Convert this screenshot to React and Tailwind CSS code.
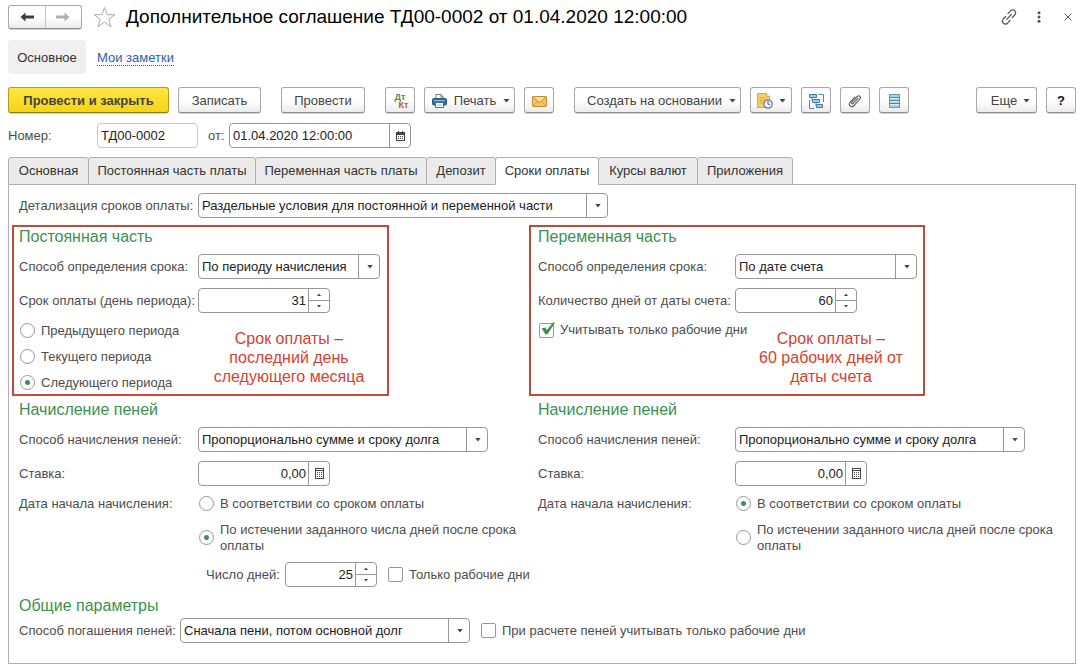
import { useState } from 'react';
import { clsx } from 'clsx';

const tabs = [
  { id: 'main', label: 'Основная', width: 'w-[81px]' },
  { id: 'fixed', label: 'Постоянная часть платы', width: 'w-[168px]' },
  { id: 'variable', label: 'Переменная часть платы', width: 'w-[172px]' },
  { id: 'deposit', label: 'Депозит', width: 'w-[70px]' },
  { id: 'terms', label: 'Сроки оплаты', width: 'w-[104px]' },
  { id: 'rates', label: 'Курсы валют', width: 'w-[100px]' },
  { id: 'files', label: 'Приложения', width: 'w-[96px]' },
];

const Caret = () => (
  <svg width="7" height="4" viewBox="0 0 7 4" className="shrink-0" aria-hidden="true">
    <path d="M0.5 0h6L3.5 3.6z" fill="#444" />
  </svg>
);

const ToolButton = ({ className, primary, children, ...rest }) => (
  <button
    type="button"
    className={clsx(
      'flex h-[26px] shrink-0 items-center justify-center whitespace-nowrap rounded-[3px] border pt-[2px] shadow-[0_1px_0_#d4d4d4]',
      primary
        ? 'border-[#b39b1c] border-b-[#8f7b10] bg-linear-to-b from-[#ffe640] to-[#f8d313] font-bold'
        : 'border-[#a9a9a9] border-b-[#8c8c8c] bg-linear-to-b from-white from-50% to-[#ececec]',
      className
    )}
    {...rest}
  >
    {children}
  </button>
);

const SelectBox = ({ id, className, options, ...rest }) => (
  <span className={clsx('relative inline-block shrink-0', className)}>
    <select
      id={id}
      className="h-[25px] w-full appearance-none rounded-[4px] border border-[#979797] bg-white pl-[3px] pr-6 text-[#222]"
      {...rest}
    >
      {options.map((o) => (
        <option key={o}>{o}</option>
      ))}
    </select>
    <span className="pointer-events-none absolute inset-y-0 right-0 flex w-[22px] items-center justify-center border-l border-[#979797]">
      <svg width="6" height="4" viewBox="0 0 6 4" aria-hidden="true">
        <path d="M0.3 0h5.4L3 3.4z" fill="#444" />
      </svg>
    </span>
  </span>
);

const fieldBox = 'flex h-[25px] shrink-0 overflow-hidden rounded-[4px] border border-[#979797] bg-white';

const Spinner = ({ id, value, className }) => {
  const [n, setN] = useState(value);
  return (
    <span className={clsx(fieldBox, className)}>
      <input
        id={id}
        value={n}
        onChange={(e) => setN(Number(e.target.value) || 0)}
        className="min-w-0 flex-1 pr-[2px] text-right text-[#222] outline-none"
      />
      <span className="flex w-[21px] flex-col border-l border-[#979797]">
        <button type="button" aria-label="Больше" onClick={() => setN(n + 1)} className="flex flex-1 items-center justify-center border-b border-[#979797]">
          <svg width="4" height="3" viewBox="0 0 4 3"><path d="M0 3h4L2 0.4z" fill="#444" /></svg>
        </button>
        <button type="button" aria-label="Меньше" onClick={() => setN(n - 1)} className="flex flex-1 items-center justify-center">
          <svg width="4" height="3" viewBox="0 0 4 3"><path d="M0 0h4L2 2.6z" fill="#444" /></svg>
        </button>
      </span>
    </span>
  );
};

const RateInput = ({ id }) => (
  <span className={clsx(fieldBox, 'w-[132px]')}>
    <input id={id} defaultValue="0,00" className="min-w-0 flex-1 pr-[2px] text-right text-[#222] outline-none" />
    <button type="button" aria-label="Калькулятор" className="flex w-[21px] items-center justify-center border-l border-[#979797]">
      <svg width="9" height="11" viewBox="0 0 9 11" shapeRendering="crispEdges">
        <path d="M0.5 0.5h8v10h-8zM0 2.5h9" fill="none" stroke="#444" />
        <path d="M2 4h1v1H2zM4 4h1v1H4zM6 4h1v1H6zM2 6h1v1H2zM4 6h1v1H4zM6 6h1v1H6zM2 8h1v1H2zM4 8h1v1H4zM6 8h1v1H6z" fill="#444" />
      </svg>
    </button>
  </span>
);

const Radio = ({ name, defaultChecked, children }) => (
  <label className="flex items-center gap-[6px]">
    <input
      type="radio"
      name={name}
      defaultChecked={defaultChecked}
      className="size-[15px] shrink-0 appearance-none rounded-full border border-[#979797] bg-white checked:bg-[radial-gradient(circle,#3f8f55_2px,white_3px)]"
    />
    <span className="pt-[2px] leading-4">{children}</span>
  </label>
);

const Checkbox = ({ defaultChecked, children }) => (
  <label className="flex items-center gap-[6px]">
    <span className="relative flex shrink-0">
      <input
        type="checkbox"
        defaultChecked={defaultChecked}
        className="peer size-[15px] appearance-none rounded-[2px] border border-[#979797] bg-white"
      />
      <svg className="pointer-events-none absolute -top-[1px] left-[2px] hidden peer-checked:block" width="15" height="14" viewBox="0 0 15 14">
        <path d="M0.6 6.2l3.8-0.8 1.4 2.6L12 0.5l2 0.2L6.6 12.2H4.4z" fill="#3f9154" />
      </svg>
    </span>
    <span className="leading-4">{children}</span>
  </label>
);

const Field = ({ id, label, labelWidth, children }) => (
  <div className="flex h-[25px] items-center">
    <label htmlFor={id} className={clsx('shrink-0 whitespace-nowrap', labelWidth)}>
      {label}
    </label>
    {children}
  </div>
);

const Heading = ({ children }) => <h2 className="text-[16px] leading-5 text-[#3c9150]">{children}</h2>;

const Penalty = ({ prefix, labelWidth, afterDays, children }) => (
  <section>
    <Heading>Начисление пеней</Heading>
    <div className="mt-[7px] flex flex-col gap-[9px]">
      <Field id={`${prefix}-method`} label="Способ начисления пеней:" labelWidth={labelWidth}>
        <SelectBox id={`${prefix}-method`} className="w-[290px]" options={['Пропорционально сумме и сроку долга']} />
      </Field>
      <Field id={`${prefix}-rate`} label="Ставка:" labelWidth={labelWidth}>
        <RateInput id={`${prefix}-rate`} />
      </Field>
    </div>
    <div role="radiogroup" aria-label="Дата начала начисления" className="mt-2 flex">
      <span className={clsx('shrink-0 pt-[2px] leading-4', labelWidth)}>Дата начала начисления:</span>
      <div className="flex flex-col gap-2 pl-px">
        <Radio name={`${prefix}-start`} defaultChecked={!afterDays}>В соответствии со сроком оплаты</Radio>
        <Radio name={`${prefix}-start`} defaultChecked={afterDays}>
          По истечении заданного числа дней после срока
          <br />
          оплаты
        </Radio>
      </div>
    </div>
    {children}
  </section>
);

const Toolbar = () => (
  <div className="mt-[13px] flex gap-5 text-[#444]">
    <div className="flex gap-[9px]">
      <ToolButton primary className="w-[161px]">Провести и закрыть</ToolButton>
      <ToolButton className="w-[83px]">Записать</ToolButton>
    </div>
    <ToolButton className="w-[84px]">Провести</ToolButton>
    <div className="flex gap-[9px]">
      <ToolButton className="w-[30px]" aria-label="Дт Кт">
        <span className="flex w-[17px] flex-col text-[9px] font-bold leading-2">
          <span className="text-[#3f9154]">Дт</span>
          <span className="self-end text-[#c8504f]">Кт</span>
        </span>
      </ToolButton>
      <ToolButton className="w-[91px] gap-[7px] pl-[3px]">
        <svg width="15" height="14" viewBox="0 0 15 14" className="shrink-0">
          <path d="M4 5V0.5h5L11 2.5V5" fill="#fff" stroke="#5d7f99" />
          <path d="M9 0.5V3h2" fill="none" stroke="#5d7f99" />
          <rect x="0.5" y="4.5" width="14" height="6.5" rx="1.2" fill="#336e97" stroke="#285b80" />
          <rect x="2" y="6" width="11" height="1.2" fill="#8cb6d2" />
          <path d="M3.5 8.5h8v5h-8z" fill="#fff" stroke="#42718f" />
          <path d="M5 11h5" stroke="#9db8ca" />
        </svg>
        Печать
        <Caret />
      </ToolButton>
      <ToolButton className="w-[30px]" aria-label="Отправить">
        <svg width="15" height="11" viewBox="0 0 15 11">
          <rect x="0.5" y="0.5" width="14" height="10" rx="0.8" fill="#f6c65c" stroke="#c58a2c" />
          <path d="M1 10l4.8-4.4M14 10L9.2 5.6" stroke="#d19a3c" />
          <path d="M1 1l6.5 5.8L14 1" fill="#fbe0a0" stroke="#c58a2c" />
        </svg>
      </ToolButton>
    </div>
    <div className="flex gap-[9px]">
      <ToolButton className="w-[167px] gap-[7px] pl-2">
        Создать на основании
        <Caret />
      </ToolButton>
      <ToolButton className="w-[42px] gap-[6px]" aria-label="Напоминания">
        <svg width="16" height="16" viewBox="0 0 16 16" className="shrink-0">
          <path d="M0.5 0.5h9l3 3v11h-12z" fill="#f7cf68" stroke="#d9ab42" />
          <path d="M9.5 0.5v3h3" fill="#fdebb8" stroke="#d9ab42" />
          <path d="M2.5 5h6M2.5 7.5h4M2.5 10h3" stroke="#d9a940" />
          <circle cx="11" cy="11" r="4.2" fill="#f4f6fb" stroke="#66779c" strokeWidth="1.2" />
          <path d="M11 8v3l2 1" fill="none" stroke="#4e6085" />
        </svg>
        <Caret />
      </ToolButton>
      <ToolButton className="w-[30px]" aria-label="Структура подчиненности">
        <svg width="15" height="15" viewBox="0 0 15 15">
          <path d="M9.5 0.5h5V8M5 14.5H0.5V6M3 4v2.5h2M7 9v3h2" fill="none" stroke="#5587a9" />
          <path d="M0.5 0.5h7v3h-7zM3.5 5.5h7v3h-7zM7.5 10.5h6v3h-6z" fill="#a6cce3" stroke="#447ba2" />
        </svg>
      </ToolButton>
      <ToolButton className="w-[30px]" aria-label="Файлы">
        <svg width="14" height="15" viewBox="0 0 14 15">
          <path
            d="M10 4.2L5.3 9.4c-.9 1-2.2-.1-1.3-1.2L9.2 2.5c1.8-1.8 4.3.3 2.7 2.3L6 11.5c-2.7 2.7-6.2-.4-3.9-3.2L6.8 3"
            fill="none"
            stroke="#5c5c5c"
            strokeWidth="1.1"
            strokeLinecap="round"
          />
        </svg>
      </ToolButton>
      <ToolButton className="w-[30px]" aria-label="Список">
        <svg width="11" height="14" viewBox="0 0 11 14" shapeRendering="crispEdges">
          <path d="M0.5 0.5h10v13h-10z" fill="#a9d3e6" stroke="#5d9abb" />
          <path d="M0 3.5h11M0 6.5h11M0 9.5h11" stroke="#4b86a8" />
          <path d="M1 4.5h9M1 7.5h9M1 10.5h9" stroke="#d8edf6" />
        </svg>
      </ToolButton>
    </div>
    <div className="ml-auto flex gap-[9px]">
      <ToolButton className="w-[61px] gap-[6px] pl-2">
        Еще
        <Caret />
      </ToolButton>
      <ToolButton className="w-[30px] font-bold text-[#111]">?</ToolButton>
    </div>
  </div>
);

const App = () => {
  const [tab, setTab] = useState('terms');

  return (
    <div className="min-h-screen bg-white pb-[6px] pl-2 pr-[6px] font-['Liberation_Sans',Arial,sans-serif] text-[13px] leading-4 text-[#4d4d4d]">
      {/* Title bar */}
      <header className="flex items-center pt-[5px]">
        <div className="flex h-6 w-[74px] rounded-[3px] border border-[#a9a9a9] border-b-[#8c8c8c] bg-linear-to-b from-white from-50% to-[#ececec] shadow-[0_1px_0_#d4d4d4]">
          <button type="button" aria-label="Назад" className="flex flex-1 items-center justify-center border-r border-[#c4c4c4]">
            <svg width="14" height="10" viewBox="0 0 14 10"><path d="M0.5 5l5-4.5v3H14v3H5.5v3z" fill="#3c3c3c" /></svg>
          </button>
          <button type="button" aria-label="Вперед" className="flex flex-1 items-center justify-center">
            <svg width="14" height="10" viewBox="0 0 14 10"><path d="M13.5 5l-5-4.500v3H0v3h8.500v3z" fill="#b0b0b0" /></svg>
          </button>
        </div>
        <button type="button" aria-label="В избранное" className="ml-[10px]">
          <svg width="25" height="22" viewBox="0 0 25 22">
            <path d="M12.5 1.5l2.7 7.2h7.6l-6.1 4.6 2.3 7.3-6.5-4.5-6.5 4.5 2.3-7.3-6.1-4.6h7.6z" fill="#fff" stroke="#ababab" />
          </svg>
        </button>
        <h1 className="ml-[9px] text-[19px] leading-6 text-black">Дополнительное соглашение ТД00-0002 от 01.04.2020 12:00:00</h1>
        <div className="ml-auto flex items-center gap-5 pr-1 text-[#555]">
          <button type="button" aria-label="Ссылка">
            <svg width="16" height="16" viewBox="0 0 16 16" fill="none" stroke="#555" strokeWidth="1.2" strokeLinecap="round">
              <path d="M7 4.500l2.500-2.700c2.800-2.600 6.800 1 4.300 4.200L11.300 8.500M9 11.500l-2.500 2.700c-2.800 2.600-6.800-1-4.300-4.200L4.700 7.500M5.800 10.300l4.500-4.800" />
            </svg>
          </button>
          <button type="button" aria-label="Меню">
            <svg width="4" height="12" viewBox="0 0 4 12" fill="#555">
              <circle cx="2" cy="1.8" r="1.5" />
              <circle cx="2" cy="6" r="1.5" />
              <circle cx="2" cy="10.2" r="1.5" />
            </svg>
          </button>
          <button type="button" aria-label="Закрыть" className="ml-[3px]">
            <svg width="8" height="8" viewBox="0 0 8 8"><path d="M0.5 0.5l7 7M7.5 0.5l-7 7" stroke="#555" /></svg>
          </button>
        </div>
      </header>

      <nav className="mt-[11px] flex items-center gap-[11px]">
        <span className="flex h-[34px] w-[78px] items-center justify-center rounded-[4px] bg-[#f0f0f0] pt-[2px] text-[#333]">Основное</span>
        <a href="#notes" className="border-b border-dotted border-[#2d5ea8] pt-[2px] leading-[14px] text-[#2d5ea8]">Мои заметки</a>
      </nav>

      <Toolbar />

      <div className="mt-[10px] flex h-[25px] items-center">
        <label htmlFor="number" className="w-[89px]">Номер:</label>
        <input id="number" defaultValue="ТД00-0002" className="h-[25px] w-[101px] rounded-[4px] border border-[#c8c8c8] px-[3px] text-[#222]" />
        <label htmlFor="date" className="ml-[10px] w-[21px]">от:</label>
        <span className={clsx(fieldBox, 'w-[182px]')}>
          <input id="date" defaultValue="01.04.2020 12:00:00" className="min-w-0 flex-1 px-[3px] text-[#222] outline-none" />
          <button type="button" aria-label="Календарь" className="flex w-[21px] items-center justify-center border-l border-[#979797]">
            <svg width="9" height="10" viewBox="0 0 9 10" shapeRendering="crispEdges">
              <path d="M0.5 1.5h8v8h-8z" fill="#fff" stroke="#444" />
              <path d="M0 1h9v3H0zM2 0h1v1H2zM6 0h1v1H6z" fill="#444" />
              <path d="M2 5h1v1H2zM4 5h1v1H4zM6 5h1v1H6zM2 7h1v1H2zM4 7h1v1H4zM6 7h1v1H6z" fill="#444" />
            </svg>
          </button>
        </span>
      </div>

      {/* Tabs */}
      <div role="tablist" className="mt-[9px] flex pl-px text-[#333]">
        {tabs.map((t) => (
          <button
            key={t.id}
            type="button"
            role="tab"
            aria-selected={tab === t.id}
            onClick={() => setTab(t.id)}
            className={clsx(
              '-mb-px -ml-px h-7 whitespace-nowrap rounded-t-[3px] border border-[#b0b0b0]',
              t.width,
              tab === t.id ? 'border-b-white bg-white' : 'bg-[#ebebeb]'
            )}
          >
            {t.label}
          </button>
        ))}
      </div>

      <main className="border border-[#b0b0b0] pb-5 pl-[10px] pr-[18px] pt-2">
        <Field id="detail" label="Детализация сроков оплаты:" labelWidth="w-[179px]">
          <SelectBox id="detail" className="w-[410px]" options={['Раздельные условия для постоянной и переменной части']} />
        </Field>

        <div className="mt-[7px] grid grid-cols-2">
          <section className="relative -ml-[7px] h-[171px] w-[377px] border-2 border-[#c4493d] pl-[5px]">
            <Heading>Постоянная часть</Heading>
            <div className="mt-[7px] flex flex-col gap-[9px]">
              <Field id="fixed-method" label="Способ определения срока:" labelWidth="w-[179px]">
                <SelectBox id="fixed-method" className="w-[182px]" options={['По периоду начисления']} />
              </Field>
              <Field id="fixed-day" label="Срок оплаты (день периода):" labelWidth="w-[179px]">
                <Spinner id="fixed-day" value={31} className="w-[132px]" />
              </Field>
            </div>
            <div className="mt-2 flex flex-col items-start gap-2 pl-px">
              <Radio name="period">Предыдущего периода</Radio>
              <Radio name="period">Текущего периода</Radio>
              <Radio name="period" defaultChecked>Следующего периода</Radio>
            </div>
            <p className="absolute bottom-2 right-[11px] w-[174px] text-center text-[16px] leading-[19px] text-[#d8402f]">
              Срок оплаты –<br />последний день<br />следующего месяца
            </p>
          </section>

          <section className="relative -ml-[9px] h-[171px] w-[396px] border-2 border-[#c4493d] pl-[7px]">
            <Heading>Переменная часть</Heading>
            <div className="mt-[7px] flex flex-col gap-[9px]">
              <Field id="var-method" label="Способ определения срока:" labelWidth="w-[197px]">
                <SelectBox id="var-method" className="w-[182px]" options={['По дате счета']} />
              </Field>
              <Field id="var-days" label="Количество дней от даты счета:" labelWidth="w-[197px]">
                <Spinner id="var-days" value={60} className="w-[122px]" />
              </Field>
            </div>
            <div className="mt-[9px] flex pl-px">
              <Checkbox defaultChecked>Учитывать только рабочие дни</Checkbox>
            </div>
            <p className="absolute bottom-2 right-[8px] w-[168px] text-center text-[16px] leading-[19px] text-[#d8402f]">
              Срок оплаты –<br />60 рабочих дней от<br />даты счета
            </p>
          </section>
        </div>

        <div className="mt-1 grid grid-cols-2">
          <Penalty prefix="fixed" labelWidth="w-[179px]" afterDays>
            <div className="mt-2 flex items-center pl-[187px]">
              <label htmlFor="days" className="w-[79px]">Число дней:</label>
              <Spinner id="days" value={25} className="mr-[11px] w-[92px]" />
              <Checkbox>Только рабочие дни</Checkbox>
            </div>
          </Penalty>
          <Penalty prefix="var" labelWidth="w-[197px]" afterDays={false} />
        </div>

        <section className="mt-[9px]">
          <Heading>Общие параметры</Heading>
          <div className="mt-[2px] flex items-center">
            <Field id="repay" label="Способ погашения пеней:" labelWidth="w-[161px]">
              <SelectBox id="repay" className="mr-[11px] w-[290px]" options={['Сначала пени, потом основной долг']} />
            </Field>
            <Checkbox>При расчете пеней учитывать только рабочие дни</Checkbox>
          </div>
        </section>
      </main>
    </div>
  );
};

export default App;
